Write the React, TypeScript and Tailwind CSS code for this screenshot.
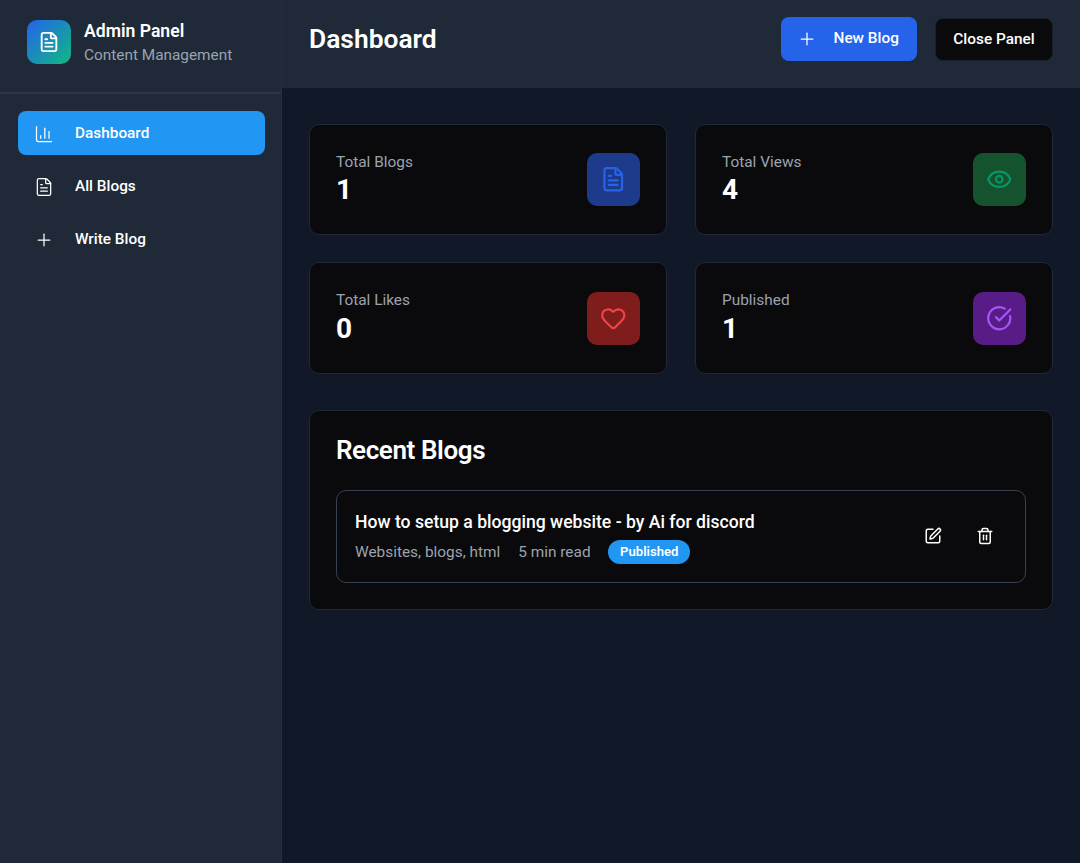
import { ChartColumn, CircleCheckBig, Eye, FileText, Heart, Plus, SquarePen, Trash2 } from "lucide-react";

const stats = [
  { label: "Total Blogs", value: "1", Icon: FileText, box: "bg-[#1e3a8a]", color: "text-[#2563eb]" },
  { label: "Total Views", value: "4", Icon: Eye, box: "bg-[#14532d]", color: "text-[#059669]" },
  { label: "Total Likes", value: "0", Icon: Heart, box: "bg-[#7f1d1d]", color: "text-[#ef4444]" },
  { label: "Published", value: "1", Icon: CircleCheckBig, box: "bg-[#581c87]", color: "text-[#a855f7]" },
];

const nav = [
  { label: "Dashboard", Icon: ChartColumn, active: true },
  { label: "All Blogs", Icon: FileText, active: false },
  { label: "Write Blog", Icon: Plus, active: false },
];

const App = () => {
  return (
    <div className="flex min-h-[863px] w-full bg-[#111827] text-white font-['Roboto',sans-serif]">
      {/* sidebar */}
      <aside className="w-[282px] shrink-0 border-r border-[#242e3c] bg-[#1f2937]">
        <div className="flex h-[94px] items-start gap-[13px] border-b-2 border-[#2d3748] pl-[27px] pt-[19.5px]">
          <div className="flex h-[44px] w-[44px] items-center justify-center rounded-[10px] bg-linear-to-br/srgb from-[#2563eb] to-[#10b981]">
            <FileText size={22} strokeWidth={2} />
          </div>
          <div className="-mt-[0.5px]">
            <div className="text-[17.6px] font-semibold leading-[24px]">Admin Panel</div>
            <div className="text-[15.36px] leading-[24px] text-[#9ca3af]">Content Management</div>
          </div>
        </div>
        <nav className="flex flex-col gap-[9px] pl-[18px] pr-[16px] pt-[17px]">
          {nav.map(({ label, Icon, active }) => (
            <div
              key={label}
              className={
                active
                  ? "flex h-[44px] items-center gap-[21px] rounded-lg bg-[#2196f3] pl-[16px] pt-[1px] text-[15.36px] font-medium"
                  : "flex h-[44px] items-center gap-[21px] rounded-lg pl-[16px] pt-[1px] text-[15.36px] font-medium"
              }
            >
              <Icon size={20} strokeWidth={1.5} />
              <span>{label}</span>
            </div>
          ))}
        </nav>
      </aside>

      <div className="flex min-w-0 flex-1 flex-col">
        {/* header */}
        <header className="flex h-[88px] items-start justify-between bg-[#1f2937] pl-[27px] pr-[27px] pt-[17px]">
          <h1 className="mt-[3px] text-[26.4px] font-semibold leading-[38px]">Dashboard</h1>
          <div className="flex items-start gap-[18px]">
            <button className="flex h-[44px] w-[136px] items-center rounded-lg bg-[#2563eb] pl-[16px] text-[15.36px] font-medium">
              <Plus size={20} strokeWidth={1.5} />
              <span className="ml-[16.5px]">New Blog</span>
            </button>
            <button className="mt-[1px] h-[43px] w-[118px] rounded-lg border border-[#181f2b] bg-[#0a0a0c] text-[15.36px] font-medium">
              Close Panel
            </button>
          </div>
        </header>

        {/* content */}
        <main className="flex flex-col gap-[36.2px] pl-[27px] pr-[27px] pt-[35.5px]">
          <div className="grid grid-cols-2 gap-x-[28px] gap-y-[27.3px]">
            {stats.map(({ label, value, Icon, box, color }) => (
              <div
                key={label}
                className="flex h-[111.5px] items-center justify-between rounded-[10px] border border-[#1f2937] bg-[#0a0a0c] pl-[26px] pr-[26px]"
              >
                <div className="mt-[1.5px]">
                  <div className="text-[15.4px] leading-[20.7px] text-[#9ca3af]">{label}</div>
                  <div className="text-[28px] font-bold leading-[36px]">{value}</div>
                </div>
                <div className={`flex h-[53px] w-[53px] items-center justify-center rounded-[10px] ${box} ${color}`}>
                  <Icon size={26.5} strokeWidth={2} />
                </div>
              </div>
            ))}
          </div>

          <section className="h-[200px] rounded-[10px] border border-[#1f2937] bg-[#0a0a0c] px-[26px] pt-[20px]">
            <h2 className="text-[26px] font-semibold leading-[38px] tracking-[-0.4px]">Recent Blogs</h2>
            <div className="mt-[21px] flex h-[93px] items-center justify-between rounded-[10px] border border-[#374151] pl-[18px] pr-[31px]">
              <div>
                <div className="text-[17.6px] font-medium leading-[26px]">How to setup a blogging website - by Ai for discord</div>
                <div className="mt-[5px] flex items-center text-[15.4px] leading-[24px] text-[#9ca3af]">
                  <span>Websites, blogs, html</span>
                  <span className="ml-[18px]">5 min read</span>
                  <span className="ml-[17.5px] rounded-full bg-[#2196f3] px-[12px] text-[13.1px] font-semibold leading-[24px] text-white">
                    Published
                  </span>
                </div>
              </div>
              <div className="flex items-center gap-[34.5px]">
                <SquarePen size={18} strokeWidth={2} />
                <Trash2 size={18} strokeWidth={2} />
              </div>
            </div>
          </section>
        </main>
      </div>
    </div>
  );
};

export default App;
